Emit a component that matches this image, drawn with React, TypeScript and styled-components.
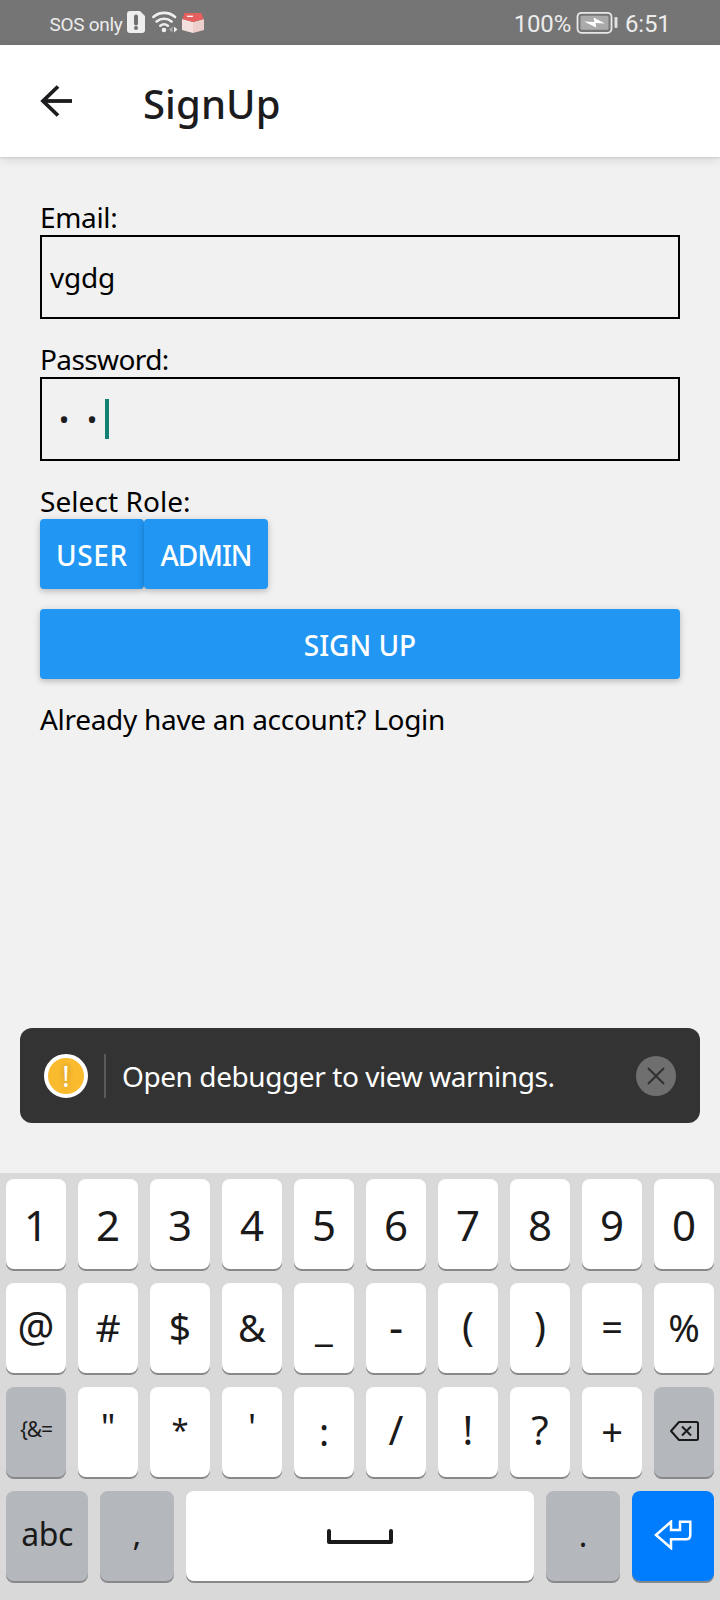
import React from 'react';
import styled, { createGlobalStyle } from 'styled-components';

const GlobalStyle = createGlobalStyle`
  *, *::before, *::after { box-sizing: border-box; }
  body { margin: 0; background: #f1f1f1; font-family: "Noto Sans", "Open Sans", sans-serif; }
`;

const Screen = styled.div`
  width: 720px;
  height: 1600px;
  display: flex;
  flex-direction: column;
  overflow: hidden;
  color: #000;
  font-size: 28px;
`;

const StatusBar = styled.div`
  height: 45px;
  flex: none;
  display: flex;
  justify-content: space-between;
  padding: 0 49.5px 0 49.5px;
  background: #757575;
  color: #ececec;
  font-family: Roboto, "Noto Sans", sans-serif;
`;

const StatusGroup = styled.div`
  display: flex;
  align-items: flex-start;
`;

const Carrier = styled.span`
  width: 77.5px;
  font-size: 19px;
  line-height: 49px;
  letter-spacing: -0.3px;
  white-space: nowrap;
`;

const StatusText = styled.span`
  font-size: 24px;
  line-height: 48px;
  letter-spacing: -0.2px;
`;

const StatusIcons = styled.svg<{ $gap?: string }>`
  display: block;
  margin: ${p => p.$gap ?? '0'};
`;

const Header = styled.header`
  position: relative;
  height: 112px;
  flex: none;
  display: flex;
  align-items: flex-start;
  padding-left: 40px;
  background: #fff;
  color: #1c1c1e;
  box-shadow: 0 1px 2px rgba(0, 0, 0, 0.1), 0 3px 10px rgba(0, 0, 0, 0.1);
`;

const BackArrow = styled.svg`
  margin-top: 39px;
`;

const Title = styled.h1`
  margin: 0 0 0 69px;
  font-size: 40px;
  font-weight: 500;
  line-height: 117px;
  letter-spacing: 0.1px;
`;

const Form = styled.form`
  flex: 1;
  padding: 40px 40px 0;
`;

const Label = styled.div<{ $spacing?: number }>`
  height: 38px;
  line-height: 40px;
  letter-spacing: ${p => p.$spacing ?? 0}px;
  white-space: nowrap;
`;

const Field = styled.div`
  height: 84px;
  margin-bottom: 20px;
  display: flex;
  align-items: center;
  padding-left: 8px;
  border: 2px solid #000;
`;

const FieldText = styled.span`
  line-height: 79px;
  letter-spacing: -0.22px;
`;

const Dot = styled.span`
  width: 28px;
  text-align: center;
  color: #1c1c1e;
  font-size: 28px;
  line-height: 80px;
`;

const Caret = styled.span`
  width: 4px;
  height: 40px;
  margin-left: -1px;
  background: #128072;
`;

const RoleRow = styled.div`
  display: flex;
  margin-bottom: 20px;
`;

const Button = styled.button<{ $width?: number; $spacing?: number }>`
  display: block;
  width: ${p => (p.$width ? `${p.$width}px` : '100%')};
  height: 70px;
  padding: 0;
  border: 0;
  border-radius: 4px;
  background: #2196f3;
  color: #fff;
  font: 500 28px/72px "Noto Sans", sans-serif;
  letter-spacing: ${p => p.$spacing ?? 0}px;
  box-shadow: 0 3px 5px rgba(0, 0, 0, 0.12), 0 1px 8px rgba(0, 0, 0, 0.12);
`;

const LoginLine = styled(Label)`
  margin-top: 20px;
`;

const Toast = styled.div`
  height: 95px;
  flex: none;
  display: flex;
  align-items: center;
  margin: 0 20px 50px;
  padding: 0 24px;
  border-radius: 12px;
  background: #333;
  color: #fff;
`;

const WarningBadge = styled.div`
  width: 44px;
  height: 44px;
  border: 4px solid #fff;
  border-radius: 50%;
  background: #fabb2f;
  font-size: 29px;
  line-height: 36px;
  text-align: center;
  text-shadow: 0 0 6px rgba(0, 0, 0, 0.3);
`;

const Divider = styled.div`
  width: 2px;
  height: 44px;
  margin: 0 16px;
  background: #5a5a5a;
`;

const ToastText = styled.span`
  flex: 1;
  line-height: 96px;
  letter-spacing: -0.42px;
  white-space: nowrap;
`;

const Close = styled.button`
  width: 40px;
  height: 40px;
  padding: 0;
  border: 0;
  border-radius: 50%;
  background: #6f6f6f;
  display: grid;
  place-items: center;
`;

const Keyboard = styled.div`
  height: 427px;
  flex: none;
  display: flex;
  flex-direction: column;
  gap: 14px;
  padding: 6px 6px 0;
  background: #d9d9d9;
`;

const KeyRow = styled.div`
  display: flex;
  gap: 12px;
`;

const keyColors = { plain: '#fff', muted: '#b4b8bd', accent: '#007dff' };

const Key = styled.div<{ $tone?: keyof typeof keyColors; $width?: number }>`
  width: ${p => p.$width ?? 60}px;
  height: 90px;
  display: flex;
  justify-content: center;
  border-radius: 8px;
  background: ${p => keyColors[p.$tone ?? 'plain']};
  box-shadow: 0 2px 0 #88898c;
  color: #1a1a1a;
`;

/* $base is the distance from the key's top edge to the text baseline. */
const KeyLabel = styled.span<{ $size: number; $base: number; $spacing?: number }>`
  height: 90px;
  font-size: ${p => p.$size}px;
  line-height: ${p => 2 * (p.$base - 0.388 * p.$size)}px;
  letter-spacing: ${p => p.$spacing ?? 0}px;
`;

const KeyIcon = styled.svg<{ $top?: number }>`
  align-self: center;
  margin-top: ${p => p.$top ?? -2}px;
  fill: none;
`;

type SymbolKey = { char: string; size?: number; base?: number };
const digits = '1234567890'.split('');
const symbols: SymbolKey[] = [
  { char: '@', size: 41 }, { char: '#', size: 39 }, { char: '$', size: 39 }, { char: '&', size: 38 }, { char: '_' },
  { char: '-', size: 44, base: 61 }, { char: '(' }, { char: ')' }, { char: '=', size: 38, base: 58 }, { char: '%', size: 38 },
];
const punctuation: SymbolKey[] = [
  { char: '"', size: 36, base: 54 }, { char: '*', size: 31, base: 55 }, { char: "'", size: 36, base: 54 }, { char: ':', size: 38 },
  { char: '/' }, { char: '!' }, { char: '?' }, { char: '+', size: 38, base: 59 },
];

const renderSymbol = (k: SymbolKey) => (
  <Key key={k.char}>
    <KeyLabel $size={k.size ?? 40} $base={k.base ?? 59}>{k.char}</KeyLabel>
  </Key>
);

export default function App() {
  return (
    <>
      <GlobalStyle />
      <Screen>
        <StatusBar>
          <StatusGroup>
            <Carrier>SOS only</Carrier>
            <StatusIcons width="80" height="45" viewBox="127 0 80 45">
              <path d="M130 11h10l5 5v14a3 3 0 0 1-3 3h-12a3 3 0 0 1-3-3V14a3 3 0 0 1 3-3z" fill="#eee" />
              <path d="M136 16.5v7" stroke="#707070" strokeWidth="4" strokeLinecap="round" />
              <circle cx="136" cy="28" r="2" fill="#707070" />
              <g fill="none" stroke="#eee" strokeWidth="2.6" strokeLinecap="round">
                <path d="M153.300 17a16.500 16.500 0 0 1 21.800 0" />
                <path d="M156.600 21.500a11.500 11.500 0 0 1 15 0" />
                <path d="M160.300 25.700a6.200 6.200 0 0 1 7.600 0" />
              </g>
              <circle cx="164" cy="30" r="2.3" fill="#eee" />
              <path d="M172.500 26.500v6l-3.500-3z" fill="#aaa" />
              <path d="M174 26.500v6l3.500-3z" fill="#eee" />
              <path d="M182 19l11 3v11l-11-3z" fill="#f5dfdd" />
              <path d="M204 19l-11 3v11l11-3z" fill="#eccfcd" />
              <path d="M184.500 13h17l2 6-10.500 3-10.500-3z" fill="#e7605d" />
              <path d="M187 16.300h6" stroke="#fff" strokeWidth="1.300" />
            </StatusIcons>
          </StatusGroup>
          <StatusGroup>
            <StatusText>100%</StatusText>
            <StatusIcons width="42" height="45" viewBox="577 0 42 45" $gap="0 7px 0 5px">
              <rect x="578.500" y="12.800" width="34" height="20" rx="4" fill="none" stroke="#e8e8e8" strokeWidth="1.800" />
              <rect x="581.500" y="15.800" width="28" height="14" rx="1.500" fill="#aaa" />
              <path d="M585 21.500l10.500 0.500-1-4.500 11.500 6-9.500-0.500 0.700 4.500z" fill="#fff" />
              <rect x="615.500" y="17" width="3" height="11" rx="1.200" fill="#e0e0e0" />
            </StatusIcons>
            <StatusText>6:51</StatusText>
          </StatusGroup>
        </StatusBar>

        <Header>
          <BackArrow width="34" height="34" viewBox="0 0 34 34" fill="none" stroke="currentColor" strokeWidth="3.800">
            <path d="M32 17H3" />
            <path d="M18 2.500L3 17l15 14.500" />
          </BackArrow>
          <Title>SignUp</Title>
        </Header>

        <Form>
          <Label $spacing={-0.35}>Email:</Label>
          <Field><FieldText>vgdg</FieldText></Field>
          <Label $spacing={-0.6}>Password:</Label>
          <Field><Dot>•</Dot><Dot>•</Dot><Caret /></Field>
          <Label $spacing={0.06}>Select Role:</Label>
          <RoleRow>
            <Button type="button" $width={104} $spacing={0.6}>USER</Button>
            <Button type="button" $width={124} $spacing={-1.0}>ADMIN</Button>
          </RoleRow>
          <Button type="button">SIGN UP</Button>
          <LoginLine $spacing={-0.3}>Already have an account? Login</LoginLine>
        </Form>

        <Toast>
          <WarningBadge>!</WarningBadge>
          <Divider />
          <ToastText>Open debugger to view warnings.</ToastText>
          <Close type="button" aria-label="Dismiss">
            <svg width="18" height="18" viewBox="0 0 18 18" fill="none" stroke="#303030" strokeWidth="2">
              <path d="M1 1l16 16M17 1L1 17" />
            </svg>
          </Close>
        </Toast>

        <Keyboard>
          <KeyRow>
            {digits.map(d => (
              <Key key={d}><KeyLabel $size={42} $base={62}>{d}</KeyLabel></Key>
            ))}
          </KeyRow>
          <KeyRow>{symbols.map(renderSymbol)}</KeyRow>
          <KeyRow>
            <Key $tone="muted"><KeyLabel $size={21} $base={51} $spacing={-1.1}>{'{&='}</KeyLabel></Key>
            {punctuation.map(renderSymbol)}
            <Key $tone="muted">
              <KeyIcon width="32" height="24" viewBox="0 0 32 24" stroke="#1a1a1a" strokeWidth="2" strokeLinejoin="round">
                <path d="M11 3h17.500a1.500 1.500 0 0 1 1.500 1.500v15a1.500 1.500 0 0 1-1.500 1.500H11l-8-9z" />
                <path d="M14 7.500l9 9M23 7.500l-9 9" />
              </KeyIcon>
            </Key>
          </KeyRow>
          <KeyRow>
            <Key $tone="muted" $width={82}><KeyLabel $size={32} $base={55} $spacing={-0.5}>abc</KeyLabel></Key>
            <Key $tone="muted" $width={74}><KeyLabel $size={33} $base={56}>,</KeyLabel></Key>
            <Key $width={348}>
              <KeyIcon width="66" height="16" viewBox="0 0 66 16" stroke="#1a1a1a" strokeWidth="4" strokeLinejoin="round" strokeLinecap="round" $top={2}>
                <path d="M2 2v11h62V2" />
              </KeyIcon>
            </Key>
            <Key $tone="muted" $width={74}><KeyLabel $size={32} $base={56}>.</KeyLabel></Key>
            <Key $tone="accent" $width={82}>
              <KeyIcon width="38" height="30" viewBox="22 29 38 30" stroke="#fff" strokeWidth="2.500">
                <path d="M24 44l15-13.300V39h9v-8.300h10.300V44q0 4.300-4.300 4.300H39V57z" />
              </KeyIcon>
            </Key>
          </KeyRow>
        </Keyboard>
      </Screen>
    </>
  );
}
